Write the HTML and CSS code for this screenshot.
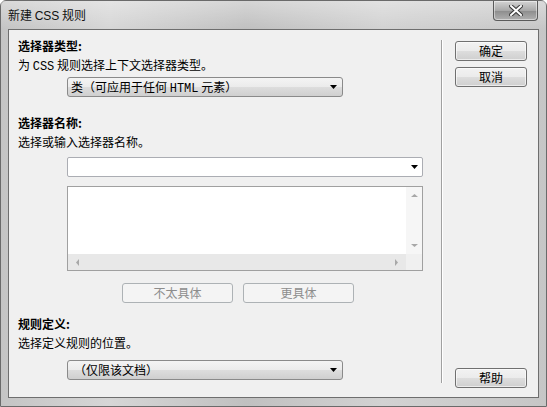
FILE: index.html
```html
<!DOCTYPE html>
<html>
<head>
    <title>新建 CSS 规则</title>
    <link rel="stylesheet" href="styles.css">
</head>
<body>
    <div class="window">
        <div class="titlebar">
            <span class="title">新建 <span class="latin">CSS</span> 规则</span>
            <div class="close">
                <svg width="14" height="11" viewBox="0 0 14 11">
                    <path d="M2 1 L12 10 M12 1 L2 10" stroke="#3a3a3a" stroke-width="4" stroke-linecap="square"/>
                    <path d="M2 1 L12 10 M12 1 L2 10" stroke="#fff" stroke-width="2" stroke-linecap="square"/>
                </svg>
            </div>
        </div>

        <div class="client">
            <div class="main">
                <div class="heading">选择器类型:</div>
                <div class="desc">为 <span class="mono">CSS</span> 规则选择上下文选择器类型。</div>
                <div class="select select-type">
                    <span>类（可应用于任何 <span class="mono">HTML</span> 元素）</span>
                    <svg class="arrow" width="9" height="6" viewBox="0 0 9 6"><path d="M1 1 H8 L4.5 5 Z" fill="#000"/></svg>
                </div>

                <div class="heading heading-name">选择器名称:</div>
                <div class="desc">选择或输入选择器名称。</div>
                <div class="combo">
                    <svg class="arrow" width="9" height="6" viewBox="0 0 9 6"><path d="M1 1 H8 L4.5 5 Z" fill="#000"/></svg>
                </div>
                <div class="listbox">
                    <div class="list-area"></div>
                    <div class="vscroll">
                        <svg width="9" height="5" viewBox="0 0 9 5"><path d="M1 4 H8 L4.5 1 Z" fill="#a8a8a8"/></svg>
                        <svg width="9" height="5" viewBox="0 0 9 5"><path d="M1 1 H8 L4.5 4 Z" fill="#a8a8a8"/></svg>
                    </div>
                    <div class="hscroll">
                        <svg width="5" height="9" viewBox="0 0 5 9"><path d="M4 1 V8 L1 4.5 Z" fill="#a8a8a8"/></svg>
                        <svg width="5" height="9" viewBox="0 0 5 9"><path d="M1 1 V8 L4 4.5 Z" fill="#a8a8a8"/></svg>
                    </div>
                    <div class="corner"></div>
                </div>
                <div class="specific-row">
                    <button class="btn btn-wide" disabled>不太具体</button>
                    <button class="btn btn-wide" disabled>更具体</button>
                </div>

                <div class="heading heading-rule">规则定义:</div>
                <div class="desc">选择定义规则的位置。</div>
                <div class="select select-rule">
                    <span>（仅限该文档）</span>
                    <svg class="arrow" width="9" height="6" viewBox="0 0 9 6"><path d="M1 1 H8 L4.5 5 Z" fill="#000"/></svg>
                </div>
            </div>

            <div class="side">
                <div class="sep"></div>
                <div class="side-buttons">
                    <div class="side-top">
                        <button class="btn">确定</button>
                        <button class="btn">取消</button>
                    </div>
                    <button class="btn">帮助</button>
                </div>
            </div>
        </div>
    </div>
</body>
</html>
```

FILE: styles.css
```css
body {
    margin: 0;
    font-family: "Noto Sans CJK SC", "DejaVu Sans", sans-serif;
    font-size: 12px;
    color: #000;
}
.window {
    width: 547px;
    height: 407px;
    box-sizing: border-box;
    border: 1px solid #6a6a6a;
    border-radius: 6px 6px 0 0;
    background: linear-gradient(to right, #c4c4c4, #d6d6d6 20%, #c0c0c0 45%, #d2d2d2 70%, #c6c6c6);
    display: flex;
    flex-direction: column;
}
.titlebar {
    height: 28px;
    display: flex;
    align-items: flex-start;
    padding-left: 7px;
    background: linear-gradient(to bottom, rgba(255,255,255,0.35), rgba(255,255,255,0));
}
.title {
    margin-top: 5px;
    line-height: 18px;
    font-size: 12px;
    color: #111;
}
.latin {
    font-family: "Liberation Sans", sans-serif;
}
.mono {
    font-family: "Liberation Mono", monospace;
    font-size: 12px;
    line-height: 1;
}
.close {
    margin-left: auto;
    margin-right: 8px;
    width: 45px;
    height: 20px;
    box-sizing: border-box;
    border: 1px solid #5a5a5a;
    border-top: none;
    border-radius: 0 0 4px 4px;
    background: linear-gradient(to bottom, #d4d4d4, #a8a8a8 50%, #8c8c8c 51%, #b0b0b0);
    box-shadow: inset 0 0 0 1px rgba(255,255,255,0.45);
    display: flex;
    align-items: center;
    justify-content: center;
}
.client {
    flex: 1;
    margin: 0 7px 8px 7px;
    border: 1px solid #6e6e6e;
    background: #f0f0f0;
    display: flex;
}
.main {
    width: 432px;
    box-sizing: border-box;
    padding: 6px 0 0 9px;
    display: flex;
    flex-direction: column;
    align-items: flex-start;
}
.heading {
    font-weight: bold;
    height: 19px;
    line-height: 19px;
}
.heading-name {
    margin-top: 16px;
}
.heading-rule {
    margin-top: 11px;
}
.desc {
    height: 19px;
    line-height: 19px;
}
.select {
    height: 20px;
    box-sizing: border-box;
    margin-left: 49px;
    border: 1px solid #8a8a8a;
    border-radius: 3px;
    background: linear-gradient(to bottom, #f4f4f4, #ebebeb 50%, #dddddd 51%, #cfcfcf);
    display: flex;
    align-items: center;
    justify-content: space-between;
    padding: 0 4px 0 3px;
    line-height: 18px;
}
.select-type {
    width: 276px;
    margin-top: 3px;
}
.select-rule {
    width: 276px;
    margin-top: 8px;
    padding-left: 6px;
}
.combo {
    width: 356px;
    height: 20px;
    box-sizing: border-box;
    margin: 6px 0 0 49px;
    border: 1px solid #abadb3;
    border-radius: 2px;
    background: #fff;
    display: flex;
    align-items: center;
    justify-content: flex-end;
    padding-right: 3px;
}
.listbox {
    width: 356px;
    height: 85px;
    box-sizing: border-box;
    margin: 9px 0 0 49px;
    border: 1px solid #a0a0a0;
    background: #fff;
    display: grid;
    grid-template-columns: 1fr 16px;
    grid-template-rows: 1fr 16px;
}
.vscroll {
    background: #f6f6f6;
    display: flex;
    flex-direction: column;
    justify-content: space-between;
    align-items: center;
    padding: 6px 0 6px;
}
.hscroll {
    background: #e8e8e8;
    display: flex;
    justify-content: space-between;
    align-items: center;
    padding: 0 7px;
}
.corner {
    background: #f0f0f0;
}
.specific-row {
    margin: 12px 0 0 104px;
    display: flex;
    gap: 10px;
}
.btn {
    width: 72px;
    height: 20px;
    box-sizing: border-box;
    padding: 0;
    border: 1px solid #707070;
    border-radius: 3px;
    background: linear-gradient(to bottom, #f2f2f2, #ebebeb 50%, #dddddd 51%, #cfcfcf);
    box-shadow: inset 0 0 0 1px rgba(255,255,255,0.6);
    font-family: "Noto Sans CJK SC", sans-serif;
    font-size: 12px;
    line-height: 16px;
    color: #000;
}
.btn-wide {
    width: 111px;
}
.btn:disabled {
    border-color: #adb2b5;
    background: #f4f4f4;
    box-shadow: none;
    color: #8d8d8d;
}
.side {
    flex: 1;
    display: flex;
    padding: 10px 0 9px 0;
}
.sep {
    width: 1px;
    margin-bottom: 5px;
    border-left: 1px solid #a0a0a0;
    background: #fff;
}
.side-buttons {
    margin-left: 12px;
    padding-top: 1px;
    display: flex;
    flex-direction: column;
    justify-content: space-between;
}
.side-top {
    display: flex;
    flex-direction: column;
    gap: 6px;
}
```
